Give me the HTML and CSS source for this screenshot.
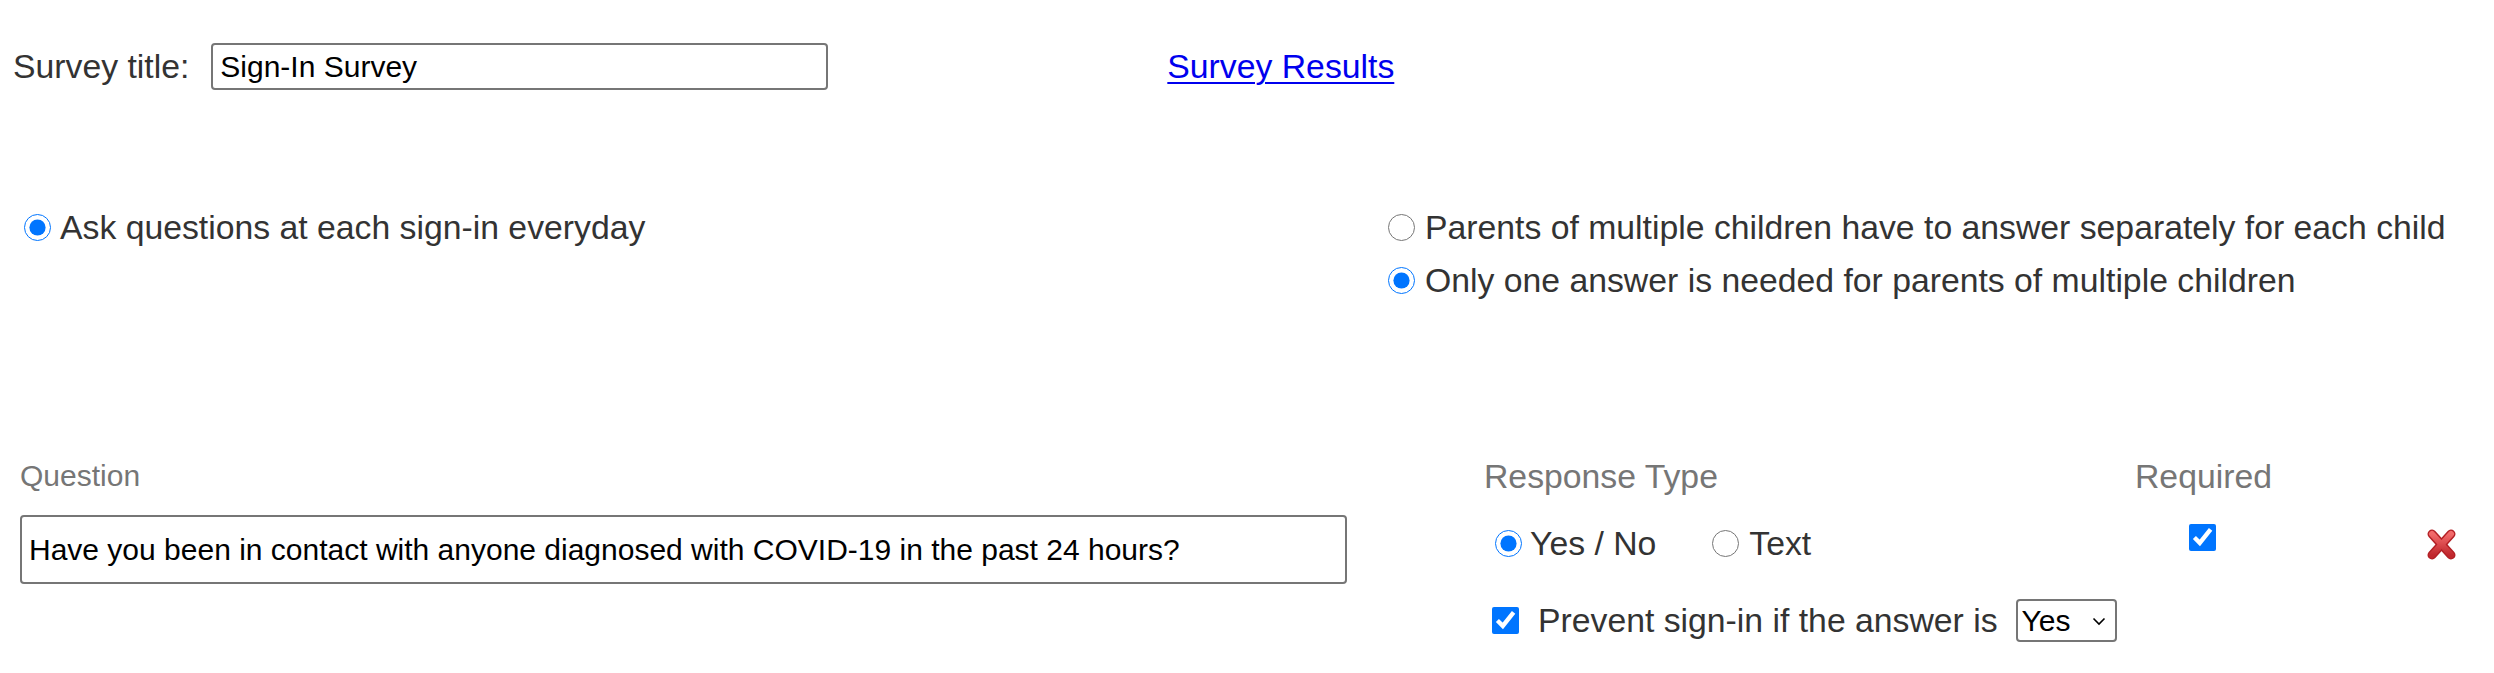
FILE: index.html
```html
<!DOCTYPE html>
<html lang="en">
<head>
<meta charset="utf-8">
<title>Survey</title>
<link rel="stylesheet" href="styles.css">
</head>
<body>
<div class="title-row">
  <label class="title-label" for="title">Survey title:</label>
  <input class="title-input" id="title" type="text" value="Sign-In Survey">
  <a class="results-link" href="#">Survey Results</a>
</div>

<div class="options-row">
  <div class="opt-left">
    <label class="opt"><input type="radio" name="freq" checked><span>Ask questions at each sign-in everyday</span></label>
  </div>
  <div class="opt-right">
    <label class="opt"><input type="radio" name="multi"><span>Parents of multiple children have to answer separately for each child</span></label>
    <label class="opt"><input type="radio" name="multi" checked><span>Only one answer is needed for parents of multiple children</span></label>
  </div>
</div>

<div class="question-grid">
  <div class="head head-question">Question</div>
  <div class="head">Response Type</div>
  <div class="head head-required">Required</div>
  <div></div>

  <div class="cell-question">
    <input class="question-input" type="text" value="Have you been in contact with anyone diagnosed with COVID-19 in the past 24 hours?">
  </div>
  <div class="cell-response">
    <div class="resp-line">
      <label class="resp"><input type="radio" name="rt" checked><span>Yes / No</span></label>
      <label class="resp resp-text"><input type="radio" name="rt"><span>Text</span></label>
    </div>
    <div class="prevent-line">
      <label class="prevent"><input type="checkbox" checked><span>Prevent sign-in if the answer is</span></label>
      <span class="select-wrap">
        <select class="answer-select"><option>Yes</option><option>No</option></select>
        <svg class="chevron" width="14" height="9" viewBox="0 0 14 9" aria-hidden="true">
          <polyline points="1.5,1.5 7,7 12.5,1.5" fill="none" stroke="#000" stroke-width="1.6"/>
        </svg>
      </span>
    </div>
  </div>
  <div class="cell-required">
    <input class="req-check" type="checkbox" checked>
  </div>
  <div class="cell-delete">
    <svg class="delete-icon" width="31" height="31" viewBox="0 0 31 31" aria-label="Delete">
      <defs>
        <linearGradient id="xg" x1="0" y1="0" x2="0" y2="1">
          <stop offset="0" stop-color="#f26a6a"/>
          <stop offset="1" stop-color="#c0272d"/>
        </linearGradient>
      </defs>
      <g stroke-linecap="round">
        <line x1="6" y1="5" x2="25" y2="26" stroke="#b32025" stroke-width="9"/>
        <line x1="25" y1="5" x2="6" y2="26" stroke="#b32025" stroke-width="9"/>
        <line x1="6" y1="5" x2="25" y2="26" stroke="url(#xg)" stroke-width="6"/>
        <line x1="25" y1="5" x2="6" y2="26" stroke="url(#xg)" stroke-width="6"/>
      </g>
    </svg>
  </div>
</div>
</body>
</html>
```

FILE: styles.css
```css
html, body {
  margin: 0;
  padding: 0;
  background: #ffffff;
}

body {
  font-family: "Liberation Sans", Arial, sans-serif;
  font-size: 33.75px;
  color: #333333;
  accent-color: #0075ff;
}

/* Title row */
.title-row {
  display: flex;
  align-items: center;
  padding: 43px 0 0 13px;
  height: 47px;
}

.title-label {
  margin-right: 22px;
}

.title-input {
  box-sizing: border-box;
  width: 617px;
  height: 47px;
  border: 2px solid #767676;
  border-radius: 4px;
  padding: 0 7px;
  font-family: "Liberation Sans", Arial, sans-serif;
  font-size: 30px;
  color: #000000;
}

.results-link {
  margin-left: 339px;
  color: #0000ee;
  text-decoration: underline;
  text-underline-offset: 4px;
  text-decoration-thickness: 2px;
}

/* Options row */
.options-row {
  display: grid;
  grid-template-columns: 1364px auto;
  padding-left: 24px;
  margin-top: 111px;
}

.opt {
  display: flex;
  align-items: center;
  height: 53px;
}

.opt-right {
  display: flex;
  flex-direction: column;
}

.opt input[type="radio"] {
  width: 27px;
  height: 27px;
  margin: 0 9px 0 0;
  flex: none;
}

.opt-right .opt input[type="radio"] {
  margin-right: 10px;
}

/* Question grid */
.question-grid {
  display: grid;
  grid-template-columns: 1464px 651px 135px auto;
  padding-left: 20px;
  margin-top: 146px;
}

.head {
  height: 46px;
  line-height: 46px;
  color: #767676;
  white-space: nowrap;
}

.head-question {
  font-size: 30px;
}

.cell-question {
  padding-top: 16px;
}

.question-input {
  box-sizing: border-box;
  width: 1327px;
  height: 69px;
  border: 2px solid #767676;
  border-radius: 4px;
  padding: 0 7px;
  font-family: "Liberation Sans", Arial, sans-serif;
  font-size: 30px;
  color: #000000;
}

.cell-response {
  padding-top: 23px;
}

.resp-line {
  display: flex;
  align-items: center;
  height: 42px;
  padding-left: 11px;
}

.resp {
  display: flex;
  align-items: center;
}

.resp input[type="radio"] {
  width: 27px;
  height: 27px;
  margin: 0 8px 0 0;
}

.resp-text {
  margin-left: 56px;
}

.resp-text input[type="radio"] {
  margin-right: 10px;
}

.prevent-line {
  display: flex;
  align-items: center;
  height: 46px;
  margin-top: 33px;
  padding-left: 8px;
}

.prevent {
  display: flex;
  align-items: center;
}

.prevent input[type="checkbox"] {
  width: 27px;
  height: 27px;
  margin: 0 19px 0 0;
}

.select-wrap {
  position: relative;
  margin-left: 18px;
  display: inline-flex;
}

.answer-select {
  -webkit-appearance: none;
  appearance: none;
  box-sizing: border-box;
  height: 43px;
  width: 101px;
  border: 2px solid #767676;
  border-radius: 4px;
  font-family: "Liberation Sans", Arial, sans-serif;
  font-size: 30px;
  color: #000000;
  background: #ffffff;
  padding: 0 30px 0 4px;
}

.chevron {
  position: absolute;
  right: 11px;
  top: 18px;
  pointer-events: none;
}

.cell-required {
  display: flex;
  justify-content: center;
  padding-top: 25px;
}

.req-check {
  width: 27px;
  height: 27px;
  margin: 0;
}

.cell-delete {
  padding-top: 30px;
  padding-left: 156px;
}

.delete-icon {
  display: block;
}
```
